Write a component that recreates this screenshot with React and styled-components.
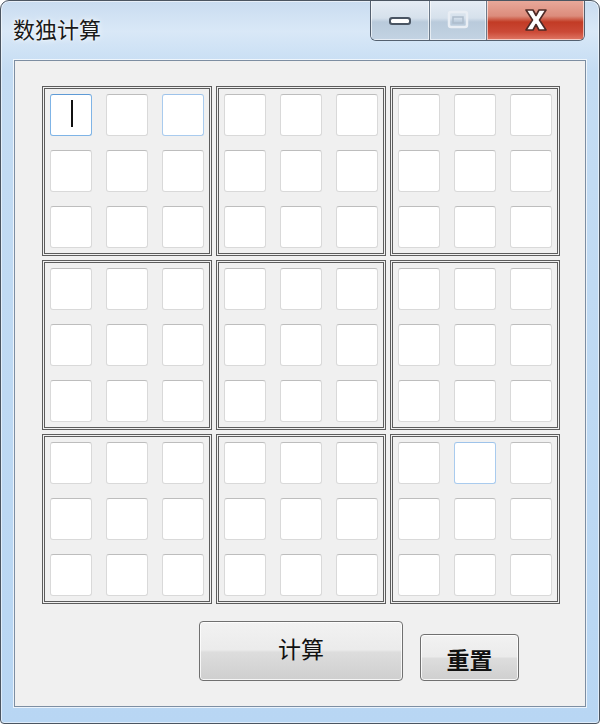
import React from 'react'
import styled, { createGlobalStyle, css } from 'styled-components'

const GlobalStyle = createGlobalStyle`
  html, body {
    margin: 0;
    padding: 0;
    background: #ffffff;
  }
  body {
    font-family: "Noto Sans CJK SC", "Noto Sans", sans-serif;
  }
`

const Window = styled.div`
  box-sizing: border-box;
  width: 600px;
  height: 724px;
  display: flex;
  flex-direction: column;
  border: 1px solid #4b5561;
  border-radius: 9px 9px 4px 4px;
  background: linear-gradient(
    180deg,
    #c9dcf0 0px,
    #d9e8f7 30px,
    #c4dcf3 70px,
    #b8d6f3 100%
  );
  box-shadow: inset 0 0 0 1px rgba(255, 255, 255, 0.55);
  overflow: hidden;
`

const TitleBar = styled.div`
  height: 59px;
  display: flex;
  align-items: flex-start;
  justify-content: space-between;
  padding: 0 14px 0 12px;
`

const Title = styled.h1`
  margin: 13px 0 0;
  font-size: 22px;
  font-weight: 400;
  line-height: 28px;
  color: #1a1a1a;
  text-shadow: 0 0 6px rgba(255, 255, 255, 0.9), 0 0 2px #fff;
`

const Caption = styled.div`
  display: flex;
  height: 40px;
  margin-top: -1px;
  border: 1px solid #54606f;
  border-top: none;
  border-radius: 0 0 6px 6px;
  overflow: hidden;
`

const CaptionButton = styled.div`
  display: flex;
  align-items: center;
  justify-content: center;
  width: ${({ $w }) => $w}px;
  box-shadow: inset 0 0 0 1px rgba(255, 255, 255, 0.6);
  ${({ $close }) =>
    $close
      ? css`
          background: linear-gradient(
            180deg,
            #e9aa9c 0%,
            #dc8c7c 40%,
            #c23b25 55%,
            #cb4a37 80%,
            #e07866 100%
          );
        `
      : css`
          background: linear-gradient(
            180deg,
            #e6edf5 0%,
            #d6e1ec 45%,
            #b9cadb 55%,
            #c3d3e3 100%
          );
          border-right: 1px solid #6c7a8a;
        `}
`

const Client = styled.div`
  flex: 1;
  margin: 0 13px 16px 13px;
  padding: 25px 0 0 27px;
  background: #f0f0f0;
  border: 1px solid #7d8ea2;
  box-shadow: 0 0 0 1px rgba(255, 255, 255, 0.7);
`

const Board = styled.div`
  display: grid;
  grid-template-columns: repeat(3, 170px);
  grid-auto-rows: 170px;
  gap: 4px;
`

const Block = styled.div`
  box-sizing: border-box;
  border: 3px double #5c5c5c;
  padding: 5px;
  display: grid;
  grid-template-columns: repeat(3, 42px);
  grid-auto-rows: 42px;
  gap: 14px;
  align-content: center;
  justify-content: center;
`

const Cell = styled.div`
  box-sizing: border-box;
  position: relative;
  background: #ffffff;
  border: 1px solid ${({ $state }) =>
    $state === 'focus' ? '#7fb4e6' : $state === 'hover' ? '#a9cbee' : '#d9d9d9'};
  border-top-color: ${({ $state }) =>
    $state === 'focus' ? '#5f9bd6' : $state === 'hover' ? '#9ec3ea' : '#bdbdbd'};
  border-radius: 3px;
`

const Caret = styled.span`
  position: absolute;
  left: 20px;
  top: 5px;
  width: 2px;
  height: 27px;
  background: #111;
`

const Actions = styled.div`
  display: flex;
  align-items: flex-end;
  gap: 17px;
  margin: 17px 0 0 157px;
`

const Button = styled.button`
  box-sizing: border-box;
  width: ${({ $w }) => $w}px;
  height: ${({ $h }) => $h}px;
  border: 1px solid #707070;
  border-radius: 4px;
  background: linear-gradient(180deg, #f2f2f2 0%, #ebebeb 48%, #dddddd 52%, #cfcfcf 100%);
  box-shadow: inset 0 0 0 1px rgba(255, 255, 255, 0.8);
  font-family: "Noto Sans CJK SC", "Noto Sans", sans-serif;
  font-size: 23px;
  font-weight: ${({ $bold }) => ($bold ? 700 : 400)};
  color: #111;
  padding: 0;
  padding-top: ${({ $bold }) => ($bold ? 4 : 0)}px;
  padding-bottom: ${({ $bold }) => ($bold ? 0 : 6)}px;
  line-height: 1;
`

const MinIcon = () => (
  <svg width="26" height="14" viewBox="0 0 26 14">
    <rect x="2" y="4" width="22" height="8" rx="3" fill="#4a5563" />
    <rect x="4" y="6" width="18" height="4" rx="1.5" fill="#ffffff" />
  </svg>
)

const MaxIcon = () => (
  <svg width="24" height="20" viewBox="0 0 24 20">
    <rect x="3" y="2" width="18" height="15" rx="2" fill="none" stroke="#e9eef4" strokeWidth="2.5" />
    <rect x="7" y="7" width="10" height="6" fill="none" stroke="#aebdcc" strokeWidth="1.5" />
  </svg>
)

const CloseIcon = () => (
  <svg width="32" height="26" viewBox="0 0 32 26">
    <path
      d="M6 3 L13 3 L16 8.5 L19 3 L26 3 L19.5 13 L26 23 L19 23 L16 17.5 L13 23 L6 23 L12.5 13 Z"
      fill="#ffffff"
      stroke="#4d2a26"
      strokeWidth="1.6"
      strokeLinejoin="round"
    />
  </svg>
)

const cellState = (b, c) => {
  if (b === 0 && c === 0) return 'focus'
  if (b === 0 && c === 2) return 'hover'
  if (b === 8 && c === 1) return 'hover'
  return 'idle'
}

export default function App() {
  return (
    <>
      <GlobalStyle />
      <Window>
        <TitleBar>
          <Title>数独计算</Title>
          <Caption>
            <CaptionButton $w={58}>
              <MinIcon />
            </CaptionButton>
            <CaptionButton $w={56}>
              <MaxIcon />
            </CaptionButton>
            <CaptionButton $w={97} $close>
              <CloseIcon />
            </CaptionButton>
          </Caption>
        </TitleBar>
        <Client>
          <Board>
            {Array.from({ length: 9 }, (_, b) => (
              <Block key={b}>
                {Array.from({ length: 9 }, (_, c) => (
                  <Cell key={c} $state={cellState(b, c)}>
                    {b === 0 && c === 0 && <Caret />}
                  </Cell>
                ))}
              </Block>
            ))}
          </Board>
          <Actions>
            <Button $w={204} $h={60}>计算</Button>
            <Button $w={99} $h={47} $bold>重置</Button>
          </Actions>
        </Client>
      </Window>
    </>
  )
}
